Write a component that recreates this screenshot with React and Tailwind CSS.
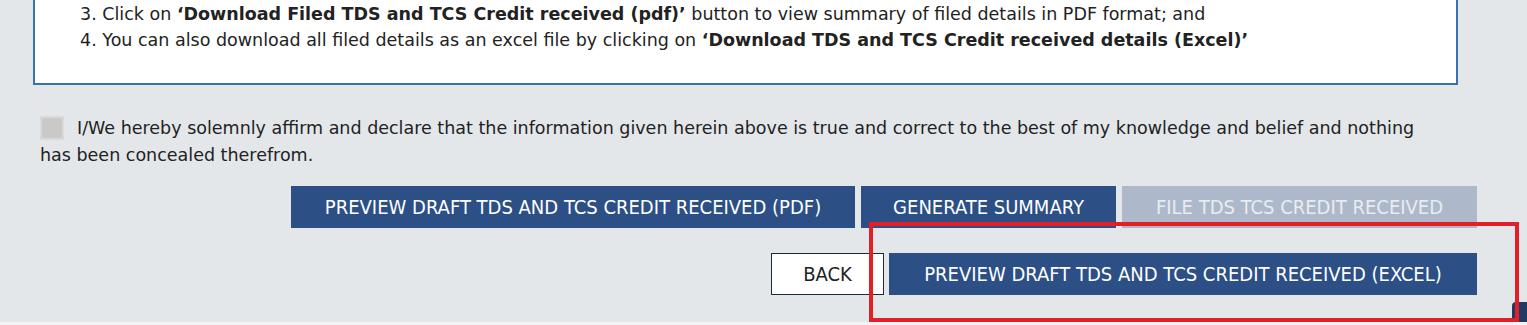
export default function App() {
  const body = { fontFamily: '"DejaVu Sans", Verdana, sans-serif' };
  const btn = { fontFamily: '"DejaVu Sans Condensed", "DejaVu Sans", Tahoma, sans-serif', fontStretch: "condensed" };
  return (
    <div className="relative w-[1527px] h-[325px] overflow-hidden bg-[#e4e7ea] text-[#222]" style={body}>
      <div className="ml-[33px] w-[1425px] bg-white border-x-2 border-b-2 border-[#3b72ab] pt-[1px] pb-[30px] pl-[45px] text-[17.5px] leading-[26px]">
        <div>
          3. Click on <b>‘Download Filed TDS and TCS Credit received (pdf)’</b> button to view summary of filed details in PDF format; and
        </div>
        <div>
          4. You can also download all filed details as an excel file by clicking on <b>‘Download TDS and TCS Credit received details (Excel)’</b>
        </div>
      </div>

      <div className="ml-[40px] w-[1400px] mt-[30px] text-[17.5px] leading-[27px]">
        <span className="inline-block align-[-6px] w-[24px] h-[24px] bg-[#c9c9c9] border-2 border-[#d9d9d9] mr-[13px]"></span>
        I/We hereby solemnly affirm and declare that the information given herein above is true and correct to the best of my knowledge and belief and nothing has been concealed therefrom.
      </div>

      <div className="flex justify-end gap-[6px] w-[1477px] mt-[17px] text-[20px]" style={btn}>
        <div className="w-[564px] h-[42px] flex items-center justify-center bg-[#2c4f86] text-white">PREVIEW DRAFT TDS AND TCS CREDIT RECEIVED (PDF)</div>
        <div className="w-[255px] h-[42px] flex items-center justify-center bg-[#2c4f86] text-white">GENERATE SUMMARY</div>
        <div className="w-[355px] h-[42px] flex items-center justify-center bg-[#adb9cb] text-[#e8ecf1]">FILE TDS TCS CREDIT RECEIVED</div>
      </div>

      <div className="flex justify-end gap-[5px] w-[1477px] mt-[25px] text-[20px]" style={btn}>
        <div className="w-[113px] h-[42px] flex items-center justify-center bg-white border border-[#1c2a3a] text-[#222]">BACK</div>
        <div className="w-[588px] h-[42px] flex items-center justify-center bg-[#2c4f86] text-white">PREVIEW DRAFT TDS AND TCS CREDIT RECEIVED (EXCEL)</div>
      </div>

      <div className="absolute left-[1512px] top-[302px] w-[20px] h-[30px] rounded-tl-[4px] bg-[#1f3a64]"></div>
      <div className="absolute left-[869px] top-[222px] w-[650px] h-[100px] border-[4px] border-[#e21f26]"></div>
      <div className="absolute left-0 bottom-0 w-full h-[3px] bg-[#f1f3f5]"></div>
    </div>
  );
}
